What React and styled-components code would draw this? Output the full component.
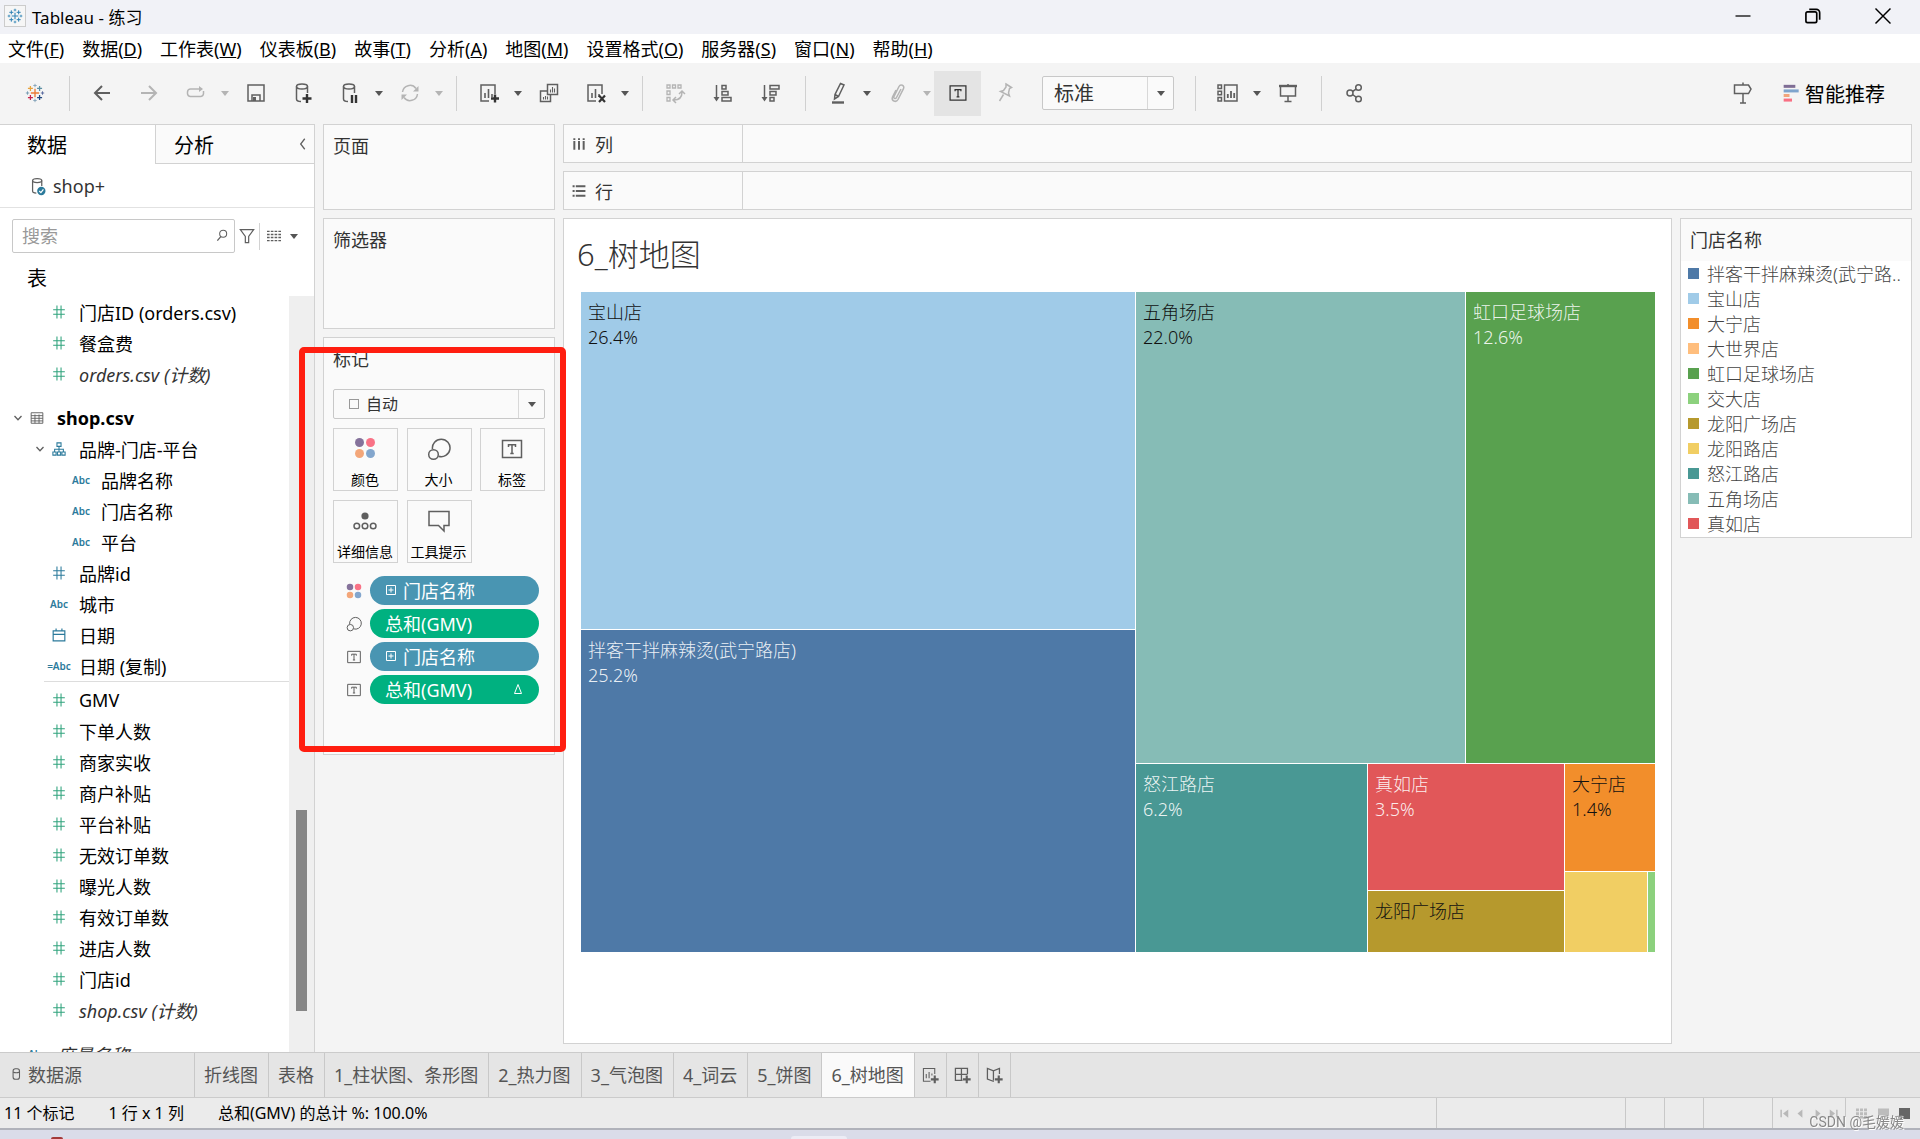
import React from "react";
import styled, { createGlobalStyle } from "styled-components";

const GlobalStyle = createGlobalStyle`
  * {
    box-sizing: border-box;
  }
  body {
    margin: 0;
    background: #f4f4f4;
    color: #000;
    font-family: "Noto Sans", "Noto Sans CJK SC", sans-serif;
    font-size: 18px;
    overflow: hidden;
  }
  button, input, select {
    font: inherit;
    color: inherit;
  }
  button {
    background: none;
    border: 0;
    padding: 0;
  }
  ul {
    list-style: none;
    margin: 0;
    padding: 0;
  }
  svg {
    display: block;
    flex: none;
  }
`;

/* ---------- icons ---------- */

function Svg({ size = 24, color = "#5f5f5f", children }) {
  return (
    <svg
      width={size}
      height={size}
      viewBox="0 0 24 24"
      fill="none"
      stroke={color}
      strokeWidth="1.5"
      aria-hidden="true"
    >
      {children}
    </svg>
  );
}

const faded = "#b4b4b4";

const TableauMark = ({ size, colors }) => {
  const c = colors || Array(9).fill("#2f83b5");
  return (
    <Svg size={size}>
      <path d="M12 7v10M7 12h10" stroke={c[0]} strokeWidth="1.6" />
      <path d="M12 1v4M10 3h4" stroke={c[1]} strokeWidth="1.2" />
      <path d="M12 19v4M10 21h4" stroke={c[2]} strokeWidth="1.2" />
      <path d="M3 10v4M1 12h4" stroke={c[3]} strokeWidth="1.2" />
      <path d="M21 10v4M19 12h4" stroke={c[4]} strokeWidth="1.2" />
      <path d="M6.5 3.5v6M3.5 6.5h6" stroke={c[5]} />
      <path d="M17.5 3.5v6M14.5 6.5h6" stroke={c[6]} />
      <path d="M6.5 14.5v6M3.5 17.5h6" stroke={c[7]} />
      <path d="M17.5 14.5v6M14.5 17.5h6" stroke={c[8]} />
    </Svg>
  );
};

const logoColors = [
  "#eb7a35", "#8aa8bd", "#8aa8bd", "#7b9fb5", "#5c6da0",
  "#e8a33d", "#5b8fa3", "#c8234a", "#1f457e",
];

const BackIcon = () => (
  <Svg><path d="M20 12H5M12 5l-7 7 7 7" strokeWidth="2" /></Svg>
);
const ForwardIcon = () => (
  <Svg color={faded}><path d="M4 12h15M12 5l7 7-7 7" strokeWidth="2" /></Svg>
);
const RedoIcon = () => (
  <Svg color={faded}>
    <path d="M9 8H6.5a3 3 0 0 0-3 3v1.5a3 3 0 0 0 3 3h10a3 3 0 0 0 3-3V10M9 8h7" />
    <path d="M15 5l4 3-4 3z" fill={faded} stroke="none" />
  </Svg>
);
const SaveIcon = () => (
  <Svg>
    <path d="M4 4h16v16H4zM8 20v-6h8v6" />
    <path d="M9 16h3v4H9z" fill="#5f5f5f" stroke="none" />
  </Svg>
);
const Cylinder = () => (
  <>
    <ellipse cx="11" cy="5.5" rx="5.5" ry="2.5" />
    <path d="M5.5 5.5V18c0 1.6 2 2.5 4.5 2.5M16.5 5.5V12" />
  </>
);
const AddDataIcon = () => (
  <Svg><Cylinder /><path d="M16 13v9M11.5 17.5h9" stroke="#333" strokeWidth="2.4" /></Svg>
);
const PauseDataIcon = () => (
  <Svg><Cylinder /><path d="M14 14v8M18 14v8" stroke="#333" strokeWidth="2.4" /></Svg>
);
const RefreshIcon = () => (
  <Svg color={faded}>
    <path d="M4.5 11a7.5 7.5 0 0 1 13.5-3.5M19.5 13A7.5 7.5 0 0 1 6 16.5" />
    <path d="M20.5 5v5.5H15zM3.5 19v-5.5H9z" fill={faded} stroke="none" />
  </Svg>
);
const ChartSheet = () => (
  <>
    <path d="M12 20H4V4h14v9" />
    <path d="M8 12v5M11.5 8v9M15 13v3" strokeWidth="1.6" />
  </>
);
const AddSheetIcon = () => (
  <Svg><ChartSheet /><path d="M18 13.5v8M14 17.5h8" stroke="#333" strokeWidth="2.4" /></Svg>
);
const ClearSheetIcon = () => (
  <Svg><ChartSheet /><path d="M15 14.5l6 6.5M21 14.5l-6 6.5" stroke="#333" strokeWidth="2.2" /></Svg>
);
const DuplicateIcon = () => (
  <Svg>
    <path d="M10.5 3.5h10v10h-10zM10.5 10h-7v10.500h10v-7" />
    <path d="M13.5 8.5v3M15.5 6v5.5M17.5 7.5v4M6.5 16v2.5M8.5 15v3.5M10.5 15.5v3" strokeWidth="1.1" />
  </Svg>
);
const SwapIcon = () => (
  <Svg color={faded}>
    <path d="M4 4h3v3H4zM9.5 4h3v3h-3zM15 4h3v3h-3zM4 10h3v3.5H4zM4 16.5h3V20H4z" strokeWidth="1.3" />
    <path d="M19 11c0 5-3 8-8 8M16 13l3-3 3 3M13 16l-3 3 3 3" />
  </Svg>
);
const SortAscIcon = () => (
  <Svg>
    <path d="M5.5 4v14M11 4.5h4v3.5h-4zM11 10.5h6V14h-6zM11 16.5h9V20h-9z" />
    <path d="M2.5 16h6l-3 4.5z" fill="#5f5f5f" stroke="none" />
  </Svg>
);
const SortDescIcon = () => (
  <Svg>
    <path d="M5.5 4v14M11 4.5h9V8h-9zM11 10.5h6V14h-6zM11 16.5h4V20h-4z" />
    <path d="M2.5 16h6l-3 4.5z" fill="#5f5f5f" stroke="none" />
  </Svg>
);
const PenIcon = () => (
  <Svg>
    <path d="M14.500 2.500l3.500 1.500-5.500 11.500-4 2.500 .500-4.500zM9 13.500l3.500 2" />
    <path d="M6 21.500h12" strokeWidth="2.4" />
  </Svg>
);
const ClipIcon = () => (
  <Svg color={faded}>
    <path d="M15 8l-4.500 8.500c-1 2-3.500.800-2.500-1.200l5-9.800c1.500-3 6-1 4.500 2.200L12 18.500c-2 3.500-7 1.500-5.500-2.500L10 9" />
  </Svg>
);
const LabelIcon = ({ size, color }) => (
  <Svg size={size} color={color}>
    <path d="M2.500 3.500h19v17h-19z" />
    <path d="M8.500 10V7.800h7V10M12 7.800V16.500M10.300 16.500h3.400" />
  </Svg>
);
const PinIcon = () => (
  <Svg color={faded}>
    <path d="M13 3l5.500 3.500-2 1-1 4.500 1 3-9-4.500 3-1L13 6zM10.500 13.500L6.500 20" />
  </Svg>
);
const CardsIcon = () => (
  <Svg>
    <path d="M2 4h3.500v3.500H2zM2 10.300h3.500v3.500H2zM2 16.500h3.500V20H2zM8.500 4H21v16H8.500z" />
    <path d="M11.800 13v4M15 10v7M18.200 12v5" strokeWidth="1.8" />
  </Svg>
);
const PresentIcon = () => (
  <Svg>
    <path d="M3 5h18" strokeWidth="2.4" />
    <path d="M12 3v2M4.500 6v9h15V6M12 15v5M8.500 20.500h7" />
  </Svg>
);
const ShareIcon = () => (
  <Svg>
    <circle cx="7" cy="12" r="3" /><circle cx="15.5" cy="6.5" r="2.8" /><circle cx="15.5" cy="18" r="2.8" />
    <path d="M9.500 10.500l3.600-2.300M9.500 13.500l3.600 2.700" />
  </Svg>
);
const SignIcon = () => (
  <Svg>
    <path d="M12 1.500v2M3.500 4h14l2.500 4-2.500 4.500h-14zM12 12.500V22M9 22h6" />
  </Svg>
);
const ShowMeIcon = () => (
  <Svg size={20}>
    <path d="M2 4h14" stroke="#7f6d95" strokeWidth="3.6" />
    <path d="M2 9.500h18" stroke="#7ea4cd" strokeWidth="3.6" />
    <path d="M2 15h7" stroke="#f1a57c" strokeWidth="3.6" />
    <path d="M2 20.500h10" stroke="#f96f83" strokeWidth="3.6" />
  </Svg>
);
const HashIcon = ({ color }) => (
  <Svg size={14} color={color}>
    <path d="M2 8h20M2 16h20M8.500 1v22M15.500 1v22" strokeWidth="1.8" />
  </Svg>
);
const HierarchyIcon = () => (
  <Svg size={14} color="#2b7a9b">
    <path d="M8.500 1.500h7v6h-7zM1.500 17h5.500v5.500H1.500zM9.300 17h5.500v5.500H9.300zM17 17h5.500v5.500H17zM12 8v9M4.500 17v-4.500h15V17" strokeWidth="1.8" />
  </Svg>
);
const CalendarIcon = () => (
  <Svg size={14} color="#2b7a9b">
    <path d="M2 5h20v17H2zM2 11h20M7 1v5M17 1v5" strokeWidth="2" />
  </Svg>
);
const TableIcon = () => (
  <Svg size={14}>
    <path d="M2 3h20v18H2zM2 8h20M2 12.500h20M2 17h20M8.500 6v15M15.500 6v15" strokeWidth="1.6" />
  </Svg>
);
const ChevronIcon = () => (
  <Svg size={12}><path d="M5 8l7 7.500 7-7.500" strokeWidth="2.6" /></Svg>
);
const ColorIcon = ({ size }) => (
  <Svg size={size}>
    <g stroke="none">
      <circle cx="6" cy="6" r="4.9" fill="#85729b" />
      <circle cx="18" cy="6" r="4.9" fill="#f97286" />
      <circle cx="6" cy="18" r="4.9" fill="#f3a679" />
      <circle cx="18" cy="18" r="4.9" fill="#83a6cd" />
    </g>
  </Svg>
);
const SizeIcon = ({ size }) => (
  <Svg size={size}>
    <path d="M5.500 12.200A8.800 8.800 0 1 1 11.500 19.300" />
    <circle cx="6.500" cy="17.500" r="4.800" />
  </Svg>
);
const DetailIcon = () => (
  <Svg>
    <circle cx="12" cy="7" r="3.6" fill="#5f5f5f" stroke="none" />
    <circle cx="3.8" cy="17" r="2.8" /><circle cx="12" cy="17" r="2.8" /><circle cx="20.2" cy="17" r="2.8" />
  </Svg>
);
const TooltipIcon = () => (
  <Svg><path d="M2 2.500h20v14h-5V22l-5.500-5.500H2z" /></Svg>
);
const PlusBoxIcon = () => (
  <Svg size={12} color="#fff"><path d="M3 3h18v18H3zM12 7v10M7 12h10" strokeWidth="2" /></Svg>
);
const DeltaIcon = () => (
  <Svg size={12} color="#fff"><path d="M12 3l7 18H5z" strokeWidth="2" /></Svg>
);

const Caret = styled.span`
  width: 0;
  height: 0;
  flex: none;
  border: 4px solid transparent;
  border-top: 5px solid ${(p) => (p.$faded ? "#b4b4b4" : "#555")};
  border-bottom: 0;
`;

/* ---------- window frame ---------- */

const Window = styled.div`
  display: flex;
  flex-direction: column;
  height: 100vh;
`;

const TitleBar = styled.header`
  display: flex;
  align-items: center;
  height: 34px;
  flex: none;
  padding: 0 13px 2px 4px;
  background: #f1f2f7;
  font-size: 17px;
`;

const AppBadge = styled.span`
  display: flex;
  padding: 2px;
  margin-right: 6px;
  background: #f6f6f6;
  border: 1px solid #ccc;
`;

const WindowButtons = styled.div`
  display: flex;
  gap: 22px;
  margin-left: auto;
`;

const WindowButton = styled.button`
  display: grid;
  place-items: center;
  width: 48px;
  height: 32px;
`;

const MenuBar = styled.nav`
  display: flex;
  align-items: center;
  gap: 18px;
  height: 29px;
  flex: none;
  padding: 1px 8px 0;
  background: #fff;
`;

const MenuItem = styled.button`
  line-height: 28px;
  white-space: nowrap;
`;

const Toolbar = styled.div`
  display: flex;
  align-items: center;
  height: 61px;
  flex: none;
  padding-right: 35px;
  padding-bottom: 1px;
`;

const ToolGroup = styled.div`
  display: flex;
  align-items: center;
  height: 43px;
  gap: ${(p) => p.$gap || 0}px;
  padding: 0 ${(p) => p.$right}px 0 ${(p) => p.$left}px;
`;

const ToolDivider = styled.span`
  width: 1px;
  height: 35px;
  background: #d0d0d0;
`;

const ToolButton = styled.button`
  display: grid;
  place-items: center;
  width: 47px;
  height: 45px;
  background: ${(p) => (p.$active ? "#e4e4e4" : "none")};
`;

const ToolCaret = styled.button`
  width: 13px;
  height: 24px;
  padding-left: 2px;
  display: flex;
  align-items: center;
`;

const SelectBox = styled.label`
  display: flex;
  align-items: stretch;
  height: ${(p) => p.$height}px;
  width: ${(p) => p.$width};
  background: #fafafa;
  border: 1px solid #c8c8c8;
  border-radius: 2px;
  font-size: ${(p) => p.$font}px;
  color: #333;

  select {
    flex: 1;
    min-width: 0;
    appearance: none;
    border: 0;
    background: none;
    outline: 0;
    padding: 0 ${(p) => p.$pad}px;
  }
`;

const SelectArrow = styled.span`
  display: grid;
  place-items: center;
  width: 26px;
  border-left: 1px solid #d8d8d8;
`;

const SelectMark = styled.span`
  width: 10px;
  height: 10px;
  margin-left: 15px;
  align-self: center;
  border: 1px solid #999;
`;

const ShowMe = styled.button`
  display: flex;
  align-items: center;
  gap: 3px;
  margin-left: 16px;
  font-size: 20px;
`;

const Guide = styled(ToolButton)`
  margin-left: auto;
`;

/* ---------- data pane ---------- */

const Workspace = styled.main`
  display: flex;
  flex: 1;
  min-height: 0;
`;

const DataPane = styled.aside`
  display: flex;
  flex-direction: column;
  width: 315px;
  flex: none;
  background: #fff;
  border-right: 1px solid #d2d2d2;
  border-top: 1px solid #d2d2d2;
`;

const PaneTabs = styled.div`
  display: flex;
  height: 39px;
  flex: none;
  font-size: 20px;
`;

const PaneTab = styled.button`
  display: flex;
  align-items: center;
  justify-content: space-between;
  text-align: left;
  width: ${(p) => (p.$active ? "155px" : "auto")};
  flex: ${(p) => (p.$active ? "none" : 1)};
  padding: 0 4px 0 ${(p) => (p.$active ? 27 : 18)}px;
  background: ${(p) => (p.$active ? "#fff" : "#fafafa")};
  border: solid #d2d2d2;
  border-width: ${(p) => (p.$active ? "0" : "0 0 1px 1px")};
`;

const Source = styled.div`
  display: flex;
  align-items: center;
  gap: 5px;
  height: 44px;
  flex: none;
  padding: 0 28px;
  border-bottom: 1px solid #e2e2e2;
  color: #333;
`;

const SearchRow = styled.div`
  display: flex;
  align-items: center;
  height: 34px;
  flex: none;
  margin: 11px 16px 0 12px;
`;

const SearchBox = styled.label`
  display: flex;
  align-items: center;
  width: 223px;
  height: 34px;
  border: 1px solid #c8c8c8;
  border-radius: 2px;
  padding: 0 5px 0 9px;
  margin-right: 4px;

  input {
    flex: 1;
    min-width: 0;
    padding: 0;
    border: 0;
    outline: 0;
    background: none;
  }
  input::placeholder {
    color: #999;
    opacity: 1;
  }
`;

const ViewTools = styled.button`
  display: flex;
  align-items: center;
  gap: 9px;
  height: 27px;
  margin-left: 4px;
  padding-left: 7px;
  border-left: 1px solid #d2d2d2;
`;

const TablesTitle = styled.h2`
  margin: 0;
  height: 43px;
  flex: none;
  padding: 4px 27px 0;
  font-size: 20px;
  font-weight: 400;
  line-height: 43px;
`;

const FieldArea = styled.div`
  display: flex;
  flex: 1;
  min-height: 0;
`;

const FieldList = styled.ul`
  flex: 1;
  min-width: 0;
  overflow: hidden;
`;

const Field = styled.li`
  display: flex;
  align-items: center;
  height: 31px;
  margin-top: ${(p) => (p.$spaced ? 13 : 0)}px;
  white-space: nowrap;
  padding-left: ${(p) => 12 + p.$level * 22}px;
  font-weight: ${(p) => (p.$bold ? 700 : 400)};
  font-style: ${(p) => (p.$italic ? "italic" : "normal")};
  color: ${(p) => (p.$italic ? "#333" : "#000")};
`;

const FieldToggle = styled.span`
  width: 14px;
  flex: none;
`;

const FieldIcon = styled.span`
  display: flex;
  justify-content: center;
  width: 22px;
  flex: none;
  margin-right: 9px;
  color: #2b7a9b;
  font-size: 10px;
  font-weight: 600;
  font-style: normal;
`;

const FieldRule = styled.li`
  height: 1px;
  margin: 0 0 2px 44px;
  background: #ddd;
`;

const ScrollTrack = styled.div`
  width: 25px;
  flex: none;
  padding: 514px 7px 0;
  background: #efefef;
`;

const ScrollThumb = styled.div`
  height: 201px;
  background: #868686;
`;

const green = "#2fa37c";
const blue = "#2b7a9b";

const typeIcons = {
  num: <HashIcon color={green} />,
  dim: <HashIcon color={blue} />,
  abc: "Abc",
  calc: "=Abc",
  date: <CalendarIcon />,
  tree: <HierarchyIcon />,
  table: <TableIcon />,
};

const fields = [
  { name: "门店ID (orders.csv)", type: "num", level: 1 },
  { name: "餐盒费", type: "num", level: 1 },
  { name: "orders.csv (计数)", type: "num", level: 1, italic: true },
  { name: "shop.csv", type: "table", level: 0, bold: true, open: true, spaced: true },
  { name: "品牌-门店-平台", type: "tree", level: 1, open: true },
  { name: "品牌名称", type: "abc", level: 2 },
  { name: "门店名称", type: "abc", level: 2 },
  { name: "平台", type: "abc", level: 2 },
  { name: "品牌id", type: "dim", level: 1 },
  { name: "城市", type: "abc", level: 1 },
  { name: "日期", type: "date", level: 1 },
  { name: "日期 (复制)", type: "calc", level: 1 },
  { rule: true },
  { name: "GMV", type: "num", level: 1 },
  { name: "下单人数", type: "num", level: 1 },
  { name: "商家实收", type: "num", level: 1 },
  { name: "商户补贴", type: "num", level: 1 },
  { name: "平台补贴", type: "num", level: 1 },
  { name: "无效订单数", type: "num", level: 1 },
  { name: "曝光人数", type: "num", level: 1 },
  { name: "有效订单数", type: "num", level: 1 },
  { name: "进店人数", type: "num", level: 1 },
  { name: "门店id", type: "num", level: 1 },
  { name: "shop.csv (计数)", type: "num", level: 1, italic: true },
  { name: "度量名称", type: "abc", level: 0, italic: true, spaced: true },
];

function DataPanel() {
  return (
    <DataPane>
      <PaneTabs>
        <PaneTab $active>数据</PaneTab>
        <PaneTab>
          分析
          <Svg size={14}><path d="M15 3l-7 9 7 9" strokeWidth="2.2" /></Svg>
        </PaneTab>
      </PaneTabs>
      <Source>
        <Svg size={20}>
          <Cylinder />
          <circle cx="16" cy="18" r="5" fill="#2b7a9b" stroke="none" />
          <path d="M13.500 18l2 2 3-4" stroke="#fff" />
        </Svg>
        shop+
      </Source>
      <SearchRow>
        <SearchBox>
          <input aria-label="搜索" placeholder="搜索" />
          <Svg size={14}>
            <circle cx="14" cy="8" r="6" strokeWidth="1.8" />
            <path d="M10 13l-6 7" strokeWidth="2.2" />
          </Svg>
        </SearchBox>
        <button aria-label="筛选">
          <Svg size={16}><path d="M2 2.500h20l-7.500 10V22h-5v-9.500z" strokeWidth="1.8" /></Svg>
        </button>
        <ViewTools aria-label="视图">
          <Svg size={14}>
            <path d="M0 4h24M0 9.300h24M0 14.600h24M0 20h24" strokeWidth="2.4" strokeDasharray="4.500 2" />
          </Svg>
          <Caret />
        </ViewTools>
      </SearchRow>
      <TablesTitle>表</TablesTitle>
      <FieldArea>
        <FieldList>
          {fields.map((f, i) =>
            f.rule ? (
              <FieldRule key={i} />
            ) : (
              <Field key={i} $level={f.level} $bold={f.bold} $italic={f.italic} $spaced={f.spaced}>
                <FieldToggle>{f.open && <ChevronIcon />}</FieldToggle>
                <FieldIcon>{typeIcons[f.type]}</FieldIcon>
                {f.name}
              </Field>
            )
          )}
        </FieldList>
        <ScrollTrack>
          <ScrollThumb />
        </ScrollTrack>
      </FieldArea>
    </DataPane>
  );
}

/* ---------- cards ---------- */

const CardColumn = styled.section`
  display: flex;
  flex-direction: column;
  gap: 8px;
  width: 232px;
  flex: none;
  margin-left: 8px;
`;

const Card = styled.div`
  position: relative;
  height: ${(p) => p.$height}px;
  flex: none;
  padding: 8px 9px;
  background: #fafafa;
  border: 1px solid #d2d2d2;
`;

const CardTitle = styled.h3`
  margin: 0;
  font-size: 18px;
  line-height: 27px;
  font-weight: 400;
  color: #333;
`;

const MarkArea = styled.div`
  display: flex;
  flex-direction: column;
  margin-top: 16px;
`;

const MarkGrid = styled.div`
  display: grid;
  grid-template-columns: repeat(3, 65px);
  justify-content: space-between;
  row-gap: 9px;
  margin-top: 9px;
`;

const MarkButton = styled.button`
  display: flex;
  flex-direction: column;
  align-items: center;
  justify-content: space-between;
  height: 63px;
  padding: 8px 1px 0 0;
  border: 1px solid #d2d2d2;
  font-size: 14px;
  line-height: 21px;
  white-space: nowrap;
`;

const Pills = styled.ul`
  display: flex;
  flex-direction: column;
  gap: 4px;
  margin: 13px 6px 0 13px;
`;

const PillRow = styled.li`
  display: flex;
  align-items: center;
  gap: 8px;
`;

const Pill = styled.span`
  display: flex;
  align-items: center;
  gap: 6px;
  flex: 1;
  height: 29px;
  padding: 0 15px 2px 15px;
  border-radius: 15px;
  background: ${(p) => (p.$measure ? "#00b180" : "#4995b2")};
  color: #fff;
`;

const PillEnd = styled.span`
  margin-left: auto;
`;

const RedFrame = styled.div`
  position: absolute;
  inset: 9px -12px 2px -25px;
  border: 6px solid #ff1e10;
  border-radius: 5px;
  pointer-events: none;
  z-index: 2;
`;

function Cards() {
  return (
    <CardColumn>
      <Card $height={86}><CardTitle>页面</CardTitle></Card>
      <Card $height={111}><CardTitle>筛选器</CardTitle></Card>
      <Card $height={418}>
        <CardTitle>标记</CardTitle>
        <MarkArea>
          <SelectBox $height={30} $width="100%" $font={16} $pad={7}>
            <SelectMark />
            <select aria-label="标记类型"><option>自动</option></select>
            <SelectArrow><Caret /></SelectArrow>
          </SelectBox>
          <MarkGrid>
            <MarkButton><ColorIcon size={22} />颜色</MarkButton>
            <MarkButton><SizeIcon size={24} />大小</MarkButton>
            <MarkButton><LabelIcon size={24} />标签</MarkButton>
            <MarkButton><DetailIcon />详细信息</MarkButton>
            <MarkButton><TooltipIcon />工具提示</MarkButton>
          </MarkGrid>
          <Pills>
            <PillRow><ColorIcon size={16} /><Pill><PlusBoxIcon />门店名称</Pill></PillRow>
            <PillRow><SizeIcon size={16} /><Pill $measure>总和(GMV)</Pill></PillRow>
            <PillRow><LabelIcon size={16} /><Pill><PlusBoxIcon />门店名称</Pill></PillRow>
            <PillRow>
              <LabelIcon size={16} />
              <Pill $measure>总和(GMV)<PillEnd><DeltaIcon /></PillEnd></Pill>
            </PillRow>
          </Pills>
        </MarkArea>
        <RedFrame />
      </Card>
    </CardColumn>
  );
}

/* ---------- view ---------- */

const ViewColumn = styled.section`
  display: flex;
  flex-direction: column;
  gap: 8px;
  flex: 1;
  min-width: 0;
  margin: 0 8px;
`;

const Shelf = styled.div`
  display: flex;
  height: 39px;
  flex: none;
  background: #fafafa;
  border: 1px solid #d2d2d2;
`;

const ShelfName = styled.div`
  display: flex;
  align-items: center;
  gap: 9px;
  width: 179px;
  padding-left: 8px;
  border-right: 1px solid #d2d2d2;
  color: #333;
`;

const ViewRow = styled.div`
  display: flex;
  flex: 1;
  min-height: 0;
  gap: 8px;
  padding-bottom: 8px;
`;

const View = styled.div`
  display: flex;
  flex-direction: column;
  flex: 1;
  min-width: 0;
  padding: 0 16px 91px 17px;
  background: #fff;
  border: 1px solid #d2d2d2;
`;

const ViewTitle = styled.h1`
  margin: 0 -4px;
  height: 73px;
  flex: none;
  font-size: 31px;
  font-weight: 300;
  line-height: 70px;
  color: #333;
`;

const Split = styled.div`
  display: flex;
  flex-direction: ${(p) => p.$dir};
  flex: ${(p) => p.$grow} 1 0;
  gap: 1px;
  min-width: 0;
  min-height: 0;
`;

const Tile = styled.div`
  flex: ${(p) => p.$grow} 1 0;
  min-width: 0;
  min-height: 0;
  background: ${(p) => p.$color};
  color: ${(p) => (p.$light ? "rgba(255,255,255,0.9)" : "#111")};
  font-weight: 300;
  line-height: 25px;
  white-space: nowrap;
  overflow: hidden;
`;

const TileLabel = styled.div`
  padding: 8px 7px;
`;

const treemap = {
  dir: "row",
  items: [
    {
      dir: "column",
      grow: 554,
      items: [
        { name: "宝山店", value: "26.4%", color: "#a0cbe8", grow: 337 },
        { name: "拌客干拌麻辣烫(武宁路店)", value: "25.2%", color: "#4e79a7", grow: 322, light: true },
      ],
    },
    {
      dir: "column",
      grow: 519,
      items: [
        {
          dir: "row",
          grow: 471,
          items: [
            { name: "五角场店", value: "22.0%", color: "#86bcb6", grow: 329 },
            { name: "虹口足球场店", value: "12.6%", color: "#59a14f", grow: 189, light: true },
          ],
        },
        {
          dir: "row",
          grow: 188,
          items: [
            { name: "怒江路店", value: "6.2%", color: "#499894", grow: 231, light: true },
            {
              dir: "column",
              grow: 196,
              items: [
                { name: "真如店", value: "3.5%", color: "#e15759", grow: 126, light: true },
                { name: "龙阳广场店", color: "#b6992d", grow: 61 },
              ],
            },
            {
              dir: "column",
              grow: 90,
              items: [
                { name: "大宁店", value: "1.4%", color: "#f28e2b", grow: 107 },
                {
                  dir: "row",
                  grow: 80,
                  items: [
                    { color: "#f1ce63", grow: 82 },
                    { color: "#8cd17d", grow: 7 },
                  ],
                },
              ],
            },
          ],
        },
      ],
    },
  ],
};

function TreeNode({ node }) {
  if (node.items) {
    return (
      <Split $dir={node.dir} $grow={node.grow || 1}>
        {node.items.map((n, i) => <TreeNode key={i} node={n} />)}
      </Split>
    );
  }
  return (
    <Tile $grow={node.grow} $color={node.color} $light={node.light}>
      {node.name && (
        <TileLabel>
          <div>{node.name}</div>
          <div>{node.value}</div>
        </TileLabel>
      )}
    </Tile>
  );
}

const Legend = styled.aside`
  align-self: flex-start;
  width: 232px;
  height: 320px;
  flex: none;
  background: #fff;
  border: 1px solid #d2d2d2;
`;

const LegendTitle = styled.h3`
  margin: 0;
  height: 42px;
  padding: 0 9px;
  background: #fafafa;
  font-size: 18px;
  font-weight: 400;
  line-height: 43px;
  color: #333;
`;

const LegendItem = styled.li`
  display: flex;
  align-items: center;
  gap: 8px;
  height: 25px;
  padding-left: 7px;
  color: #444;
  font-weight: 300;
  line-height: 24px;
  white-space: nowrap;

  &::before {
    content: "";
    width: 11px;
    height: 11px;
    flex: none;
    background: ${(p) => p.$color};
  }
`;

const legend = [
  ["拌客干拌麻辣烫(武宁路..", "#4e79a7"],
  ["宝山店", "#a0cbe8"],
  ["大宁店", "#f28e2b"],
  ["大世界店", "#ffbe7d"],
  ["虹口足球场店", "#59a14f"],
  ["交大店", "#8cd17d"],
  ["龙阳广场店", "#b6992d"],
  ["龙阳路店", "#f1ce63"],
  ["怒江路店", "#499894"],
  ["五角场店", "#86bcb6"],
  ["真如店", "#e15759"],
];

/* ---------- bottom bars ---------- */

const SheetTabs = styled.nav`
  display: flex;
  height: 46px;
  flex: none;
  background: #e5e5e5;
  border: solid #cbcbcb;
  border-width: 1px 0;
`;

const SheetTab = styled.button`
  display: flex;
  align-items: center;
  gap: 5px;
  width: ${(p) => (p.$source ? "195px" : "auto")};
  padding: 0 10px 2px 9px;
  border-right: 1px solid #c8c8c8;
  background: ${(p) => (p.$active ? "#fafafa" : "none")};
  color: #555;
  white-space: nowrap;
`;

const NewTab = styled(SheetTab)`
  justify-content: center;
  width: 32px;
  padding: 0;
`;

const StatusBar = styled.footer`
  display: flex;
  height: 32px;
  flex: none;
  background: #ebebeb;
  border-bottom: 2px solid #b0b2ba;
  font-size: 16px;
  line-height: 30px;
`;

const StatusText = styled.span`
  margin: 0 30px 0 4px;
`;

const StatusCells = styled.div`
  display: flex;
  margin-left: auto;
`;

const StatusCell = styled.div`
  display: flex;
  align-items: center;
  justify-content: space-evenly;
  width: ${(p) => p.$width}px;
  border-left: 1px solid #c8c8c8;
`;

const TaskBar = styled.div`
  display: flex;
  align-items: flex-end;
  height: 9px;
  flex: none;
  background: #dadce9;
`;

const TaskIcon = styled.span`
  width: 12px;
  height: 2px;
  margin-left: 51px;
  border-radius: 6px 6px 0 0;
  background: #a33a3a;
`;

const TaskActive = styled.span`
  width: 56px;
  height: 3px;
  margin-left: 728px;
  border-radius: 4px 4px 0 0;
  background: #ececf5;
`;

const Watermark = styled.div`
  position: fixed;
  right: 16px;
  bottom: 6px;
  font-family: Roboto, "Noto Sans CJK SC", sans-serif;
  font-size: 14px;
  line-height: 22px;
  color: #888;
  text-shadow: 1px 1px 0 #fff;
`;

const menus = [
  ["文件", "F"], ["数据", "D"], ["工作表", "W"], ["仪表板", "B"], ["故事", "T"],
  ["分析", "A"], ["地图", "M"], ["设置格式", "O"], ["服务器", "S"], ["窗口", "N"], ["帮助", "H"],
];

const sheets = ["折线图", "表格", "1_柱状图、条形图", "2_热力图", "3_气泡图", "4_词云", "5_饼图", "6_树地图"];

const plus = <path d="M18 12v11M12.500 17.500h11" strokeWidth="3" />;

export default function App() {
  return (
    <Window>
      <GlobalStyle />
      <TitleBar>
        <AppBadge><TableauMark size={16} /></AppBadge>
        Tableau - 练习
        <WindowButtons>
          <WindowButton aria-label="最小化">
            <Svg size={20} color="#000"><path d="M3 12h18" /></Svg>
          </WindowButton>
          <WindowButton aria-label="还原">
            <Svg size={20} color="#000">
              <rect x="3.5" y="7" width="13" height="13" rx="2" strokeWidth="2" />
              <path d="M7.500 4H16a4 4 0 0 1 4 4v8.500" strokeWidth="2" />
            </Svg>
          </WindowButton>
          <WindowButton aria-label="关闭">
            <Svg size={20} color="#000"><path d="M3 3l18 18M21 3L3 21" strokeWidth="1.7" /></Svg>
          </WindowButton>
        </WindowButtons>
      </TitleBar>

      <MenuBar>
        {menus.map(([name, key]) => (
          <MenuItem key={key}>{name}(<u>{key}</u>)</MenuItem>
        ))}
      </MenuBar>

      <Toolbar>
        <ToolGroup $left={11} $right={11}>
          <ToolButton aria-label="Tableau"><TableauMark size={20} colors={logoColors} /></ToolButton>
        </ToolGroup>
        <ToolDivider />
        <ToolGroup $left={8} $right={10}>
          <ToolButton><BackIcon /></ToolButton>
          <ToolButton><ForwardIcon /></ToolButton>
          <ToolButton><RedoIcon /></ToolButton>
          <ToolCaret><Caret $faded /></ToolCaret>
          <ToolButton><SaveIcon /></ToolButton>
          <ToolButton><AddDataIcon /></ToolButton>
          <ToolButton><PauseDataIcon /></ToolButton>
          <ToolCaret><Caret /></ToolCaret>
          <ToolButton><RefreshIcon /></ToolButton>
          <ToolCaret><Caret $faded /></ToolCaret>
        </ToolGroup>
        <ToolDivider />
        <ToolGroup $left={8} $right={10}>
          <ToolButton><AddSheetIcon /></ToolButton>
          <ToolCaret><Caret /></ToolCaret>
          <ToolButton><DuplicateIcon /></ToolButton>
          <ToolButton><ClearSheetIcon /></ToolButton>
          <ToolCaret><Caret /></ToolCaret>
        </ToolGroup>
        <ToolDivider />
        <ToolGroup $left={8} $right={11} $gap={1}>
          <ToolButton><SwapIcon /></ToolButton>
          <ToolButton><SortAscIcon /></ToolButton>
          <ToolButton><SortDescIcon /></ToolButton>
        </ToolGroup>
        <ToolDivider />
        <ToolGroup $left={8} $right={14}>
          <ToolButton><PenIcon /></ToolButton>
          <ToolCaret><Caret /></ToolCaret>
          <ToolButton><ClipIcon /></ToolButton>
          <ToolCaret><Caret $faded /></ToolCaret>
          <ToolButton $active><LabelIcon size={20} color="#333" /></ToolButton>
          <ToolButton><PinIcon /></ToolButton>
        </ToolGroup>
        <SelectBox $height={34} $width="132px" $font={20} $pad={11}>
          <select aria-label="适合"><option>标准</option></select>
          <SelectArrow><Caret /></SelectArrow>
        </SelectBox>
        <ToolGroup $left={11} $right={10} />
        <ToolDivider />
        <ToolGroup $left={8} $right={10}>
          <ToolButton><CardsIcon /></ToolButton>
          <ToolCaret><Caret /></ToolCaret>
          <ToolButton><PresentIcon /></ToolButton>
        </ToolGroup>
        <ToolDivider />
        <ToolGroup $left={9} $right={9}>
          <ToolButton><ShareIcon /></ToolButton>
        </ToolGroup>
        <Guide><SignIcon /></Guide>
        <ShowMe><ShowMeIcon />智能推荐</ShowMe>
      </Toolbar>

      <Workspace>
        <DataPanel />
        <Cards />
        <ViewColumn>
          <Shelf>
            <ShelfName>
              <Svg size={14}><path d="M4 2v3M12 2v3M20 2v3M4 7v15M12 7v15M20 7v15" strokeWidth="3.4" /></Svg>
              列
            </ShelfName>
          </Shelf>
          <Shelf>
            <ShelfName>
              <Svg size={14}><path d="M1 4h3.500M1 12h3.500M1 20h3.500M6.500 4h16.500M6.500 12h16.500M6.500 20h16.500" strokeWidth="3.4" /></Svg>
              行
            </ShelfName>
          </Shelf>
          <ViewRow>
            <View>
              <ViewTitle>6_树地图</ViewTitle>
              <TreeNode node={treemap} />
            </View>
            <Legend>
              <LegendTitle>门店名称</LegendTitle>
              <ul>
                {legend.map(([name, color]) => (
                  <LegendItem key={name} $color={color}>{name}</LegendItem>
                ))}
              </ul>
            </Legend>
          </ViewRow>
        </ViewColumn>
      </Workspace>

      <SheetTabs>
        <SheetTab $source>
          <Svg size={14}>
            <rect x="7" y="3" width="11" height="18" rx="4" strokeWidth="1.8" />
            <path d="M7 8.500c3 1.500 8 1.500 11 0" strokeWidth="1.8" />
          </Svg>
          数据源
        </SheetTab>
        {sheets.map((name) => (
          <SheetTab key={name} $active={name === "6_树地图"}>{name}</SheetTab>
        ))}
        <NewTab aria-label="新建工作表">
          <Svg size={17}><path d="M12 20H2V2h16v8M6 10v6M10 7v9M14 9v3" />{plus}</Svg>
        </NewTab>
        <NewTab aria-label="新建仪表板">
          <Svg size={17}><path d="M12 19H2V2h17v8M2 10.500h17M10.500 2v17" strokeWidth="1.8" />{plus}</Svg>
        </NewTab>
        <NewTab aria-label="新建故事">
          <Svg size={17}><path d="M11 20.500L2 17V2l8.500 3.500L19 2v8M10.500 5.500V19" strokeWidth="1.8" />{plus}</Svg>
        </NewTab>
      </SheetTabs>

      <StatusBar>
        <StatusText>11 个标记</StatusText>
        <StatusText>1 行 x 1 列</StatusText>
        <StatusText>总和(GMV) 的总计 %: 100.0%</StatusText>
        <StatusCells>
          <StatusCell $width={189} />
          <StatusCell $width={39} />
          <StatusCell $width={39} />
          <StatusCell $width={69} />
          <StatusCell $width={73}>
            <Svg size={9} color="#b8b8b8"><path d="M3 2v20" strokeWidth="4" /><path d="M22 1v22L8 12z" fill="#b8b8b8" stroke="none" /></Svg>
            <Svg size={9} color="#b8b8b8"><path d="M17 1v22L4 12z" fill="#b8b8b8" stroke="none" /></Svg>
            <Svg size={9} color="#b8b8b8"><path d="M7 1v22l13-11z" fill="#b8b8b8" stroke="none" /></Svg>
            <Svg size={9} color="#b8b8b8"><path d="M21 2v20" strokeWidth="4" /><path d="M2 1v22l14-11z" fill="#b8b8b8" stroke="none" /></Svg>
          </StatusCell>
          <StatusCell $width={75}>
            <Svg size={11} color="#bcbcbc"><path d="M0 4h24M0 12h24M0 20h24" strokeWidth="6" strokeDasharray="6.500 2.250" /></Svg>
            <Svg size={11}><path d="M0 1h24v15H0zM0 19h24v4H0z" fill="#bcbcbc" stroke="none" /></Svg>
            <Svg size={11}><path d="M0 0h24v24H0z" fill="#666" stroke="none" /></Svg>
          </StatusCell>
        </StatusCells>
      </StatusBar>
      <TaskBar>
        <TaskIcon />
        <TaskActive />
      </TaskBar>
      <Watermark>CSDN @毛媛媛</Watermark>
    </Window>
  );
}
